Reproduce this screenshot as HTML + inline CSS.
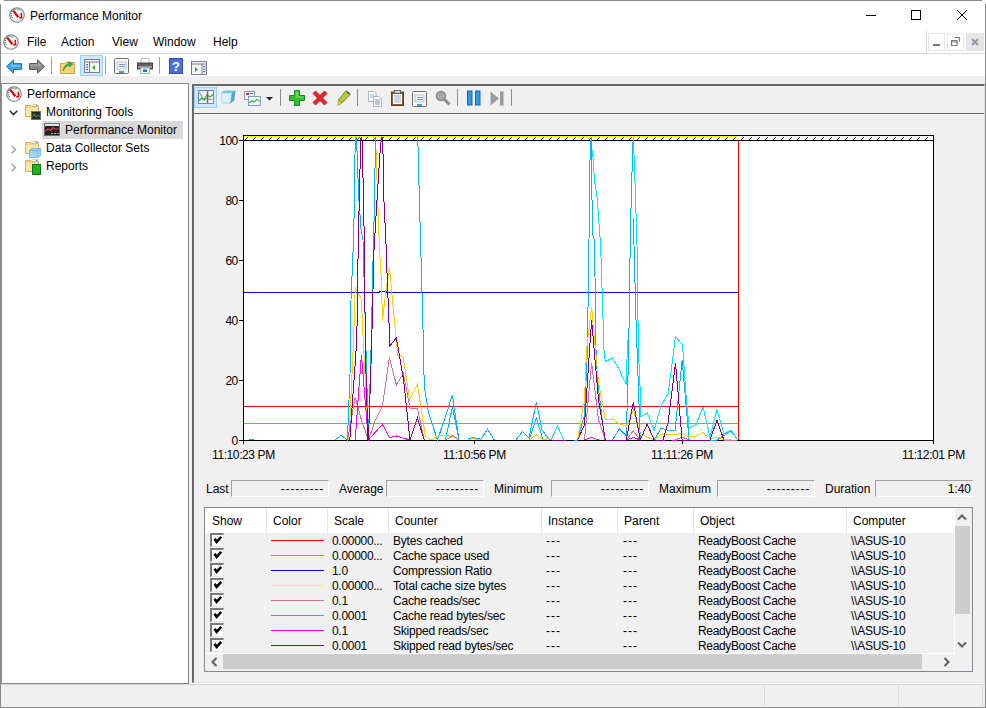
<!DOCTYPE html>
<html><head><meta charset="utf-8">
<style>
*{margin:0;padding:0;box-sizing:border-box}
html,body{width:986px;height:708px;overflow:hidden;background:#fff}
body{position:relative;font-family:"Liberation Sans",sans-serif;font-size:12px;color:#000}
.a{position:absolute}
.t{position:absolute;line-height:14px;white-space:nowrap}
.box{position:absolute;background:#f0f0f0;border-top:1px solid #a0a0a0;border-left:1px solid #a0a0a0;border-right:1px solid #fff;border-bottom:1px solid #fff}
.sep{position:absolute;width:1px;background:#8c8c8c}
.hs{position:absolute;width:1px;height:20px;background:#d9d9d9}
svg{position:absolute;overflow:visible}
</style></head>
<body>
<!-- window border -->
<div class="a" style="left:4px;top:0;width:978px;height:1px;background:#8a8a8a"></div>
<div class="a" style="left:0;top:4px;width:1px;height:704px;background:#8a8a8a"></div>
<div class="a" style="left:985px;top:4px;width:1px;height:704px;background:#8a8a8a"></div>
<div class="a" style="left:0;top:707px;width:986px;height:1px;background:#8a8a8a"></div>


<svg width="0" height="0" style="position:absolute">
<defs>
<symbol id="app" viewBox="0 0 16 16">
<circle cx="8" cy="8" r="7.2" fill="#fff" stroke="#858585" stroke-width="1.3"/>
<circle cx="8" cy="8" r="6.2" fill="none" stroke="#dcdcdc" stroke-width="0.7"/>
<path d="M3.6 10.8 A5 5 0 0 1 10.8 3.6" fill="none" stroke="#4a7a5a" stroke-width="1.3" stroke-dasharray="1.1 0.9"/>
<path d="M4.2 3.6 L9.4 10.2" stroke="#e00000" stroke-width="2.2"/>
<path d="M12.2 5.8 L12.6 10.8 L10.2 10.8" fill="none" stroke="#e00000" stroke-width="1.5"/>
</symbol>
<symbol id="folder" viewBox="0 0 16 16">
<path d="M0.5 2.5 H6 L7 3.5 H13.5 V13.5 H0.5 Z" fill="#f3d689" stroke="#d7b25a" stroke-width="1"/>
<path d="M1 5 H13 V13 H1 Z" fill="#fbe6a8"/>
<rect x="8" y="1.5" width="5" height="2" fill="#fff" stroke="#c9b27a" stroke-width="0.6"/>
<rect x="11" y="2" width="1.5" height="1" fill="#3a7bd5"/>
</symbol>
</defs>
</svg>
<svg style="left:9px;top:7px" width="16" height="16"><use href="#app"/></svg>
<svg style="left:3px;top:34px" width="16" height="16"><use href="#app"/></svg>

<!-- MDI child buttons -->
<div class="a" style="left:926px;top:31px;width:1px;height:23px;background:#d9d9d9"></div>
<div class="a" style="left:928px;top:33px;width:17px;height:18px;border:1px solid #e6e6e6;background:#fff"></div>
<div class="a" style="left:933px;top:44px;width:7px;height:2px;background:#6d7a8a"></div>
<div class="a" style="left:947px;top:33px;width:17px;height:18px;border:1px solid #e6e6e6;background:#fff"></div>
<svg style="left:951px;top:37px" width="9" height="9"><path d="M3.5 0.5 H8.5 V4.5 M0.5 3.5 H6 V8.5 H0.5 Z M0.5 5 H6" fill="none" stroke="#6d7a8a" stroke-width="1.2"/></svg>
<div class="a" style="left:966px;top:33px;width:18px;height:18px;background:#e5e5e5"></div>
<svg style="left:971px;top:38px" width="8" height="8"><path d="M1 1 L7 7 M7 1 L1 7" stroke="#8a97a6" stroke-width="1.8"/></svg>

<!-- title buttons -->
<div class="a" style="left:866px;top:15px;width:10px;height:1px;background:#000"></div>
<div class="a" style="left:911px;top:10px;width:10px;height:10px;border:1px solid #000"></div>
<svg style="left:957px;top:10px" width="10" height="10"><path d="M0 0 L10 10 M10 0 L0 10" stroke="#000" stroke-width="1"/></svg>

<!-- title -->
<div class="t" style="left:30px;top:9px">Performance Monitor</div>
<!-- menu -->
<div class="t" style="left:27px;top:35px">File</div>
<div class="t" style="left:61px;top:35px">Action</div>
<div class="t" style="left:112px;top:35px">View</div>
<div class="t" style="left:153px;top:35px">Window</div>
<div class="t" style="left:213px;top:35px">Help</div>
<div class="a" style="left:1px;top:53px;width:984px;height:1px;background:#d9d9d9"></div>

<!-- toolbar gray strip -->
<div class="a" style="left:1px;top:76px;width:984px;height:631px;background:#f0f0f0"></div>

<!-- tree panel -->
<div class="a" style="left:1px;top:83px;width:188px;height:601px;background:#fff;border:1px solid #828790"></div>


<!-- main toolbar -->
<svg style="left:6px;top:59px" width="16" height="15"><path d="M0.5 7.5 L7.5 0.8 V4.5 H15.5 V10.5 H7.5 V14.2 Z" fill="#3da2e8" stroke="#1b78c8" stroke-width="1"/><path d="M3 7.5 L7 4 V6 H14 V8 H7 Z" fill="#8fd0ff" opacity=".6"/></svg>
<svg style="left:29px;top:59px" width="16" height="15"><path d="M15.5 7.5 L8.5 0.8 V4.5 H0.5 V10.5 H8.5 V14.2 Z" fill="#8a8a8a" stroke="#5a5a5a" stroke-width="1"/><path d="M1.5 5.5 H9 V3 L13 7 H1.5Z" fill="#b5b5b5" opacity=".7"/></svg>
<div class="sep" style="left:51px;top:57px;height:17px;background:#a0a0a0"></div>
<svg style="left:60px;top:59px" width="16" height="16"><path d="M0.5 4.5 H5 L6 3.5 H14.5 V14.5 H0.5 Z" fill="#f7dc8e" stroke="#c9a24a"/><path d="M1 7 H14 V14 H1Z" fill="#f5d27a"/><path d="M3 12 C4 7 6 5 9 4.5 L8.5 2.5 L13 5 L9.5 8 L9.2 6.3 C7 6.8 5 8.5 3 12Z" fill="#3cb043" stroke="#2a8a30" stroke-width=".6"/></svg>
<div class="a" style="left:80px;top:55px;width:23px;height:21px;background:#cce8ff;border:1px solid #99d1ff"></div>
<svg style="left:84px;top:59px" width="16" height="14"><rect x="0.5" y="0.5" width="15" height="13" fill="#f4f4f4" stroke="#7a7f87"/><path d="M0.5 3 H15.5" stroke="#7a7f87"/><rect x="2" y="5" width="2" height="1.2" fill="#3a6fc4"/><rect x="2" y="7.5" width="2" height="1.2" fill="#3a6fc4"/><rect x="2" y="10" width="2" height="1.2" fill="#3a6fc4"/><path d="M5.5 3 V13.5" stroke="#7a7f87"/><path d="M11 6 L8 8.5 L11 11Z" fill="#32b032"/></svg>
<div class="sep" style="left:105px;top:57px;height:17px;background:#a0a0a0"></div>
<svg style="left:114px;top:58px" width="16" height="16"><rect x="0.5" y="0.5" width="14" height="15" rx="1" fill="#f8f8f8" stroke="#6e6e6e"/><rect x="3" y="4" width="9" height="7" fill="#eef3fa" stroke="#a8b4c4" stroke-width=".7"/><path d="M5 6.5 H11 M5 8.5 H11" stroke="#6b8fc7" stroke-width=".9"/><rect x="5" y="13" width="5" height="2" fill="#3aa0e8"/></svg>
<svg style="left:137px;top:58px" width="16" height="16"><rect x="4" y="0.5" width="8" height="5" fill="#fff" stroke="#bbb"/><rect x="0.5" y="5" width="15" height="6" fill="#5f5f5f" stroke="#444"/><rect x="1" y="8" width="14" height="2" fill="#9a9a9a"/><rect x="3.5" y="10" width="9" height="5.5" fill="#eaf4fb" stroke="#9bb"/><rect x="6" y="11.5" width="4" height="2.5" fill="#2a6fb0"/></svg>
<div class="sep" style="left:159px;top:57px;height:17px;background:#a0a0a0"></div>
<svg style="left:169px;top:58px" width="14" height="16"><rect x="0" y="0" width="14" height="16" fill="#2f4fb5"/><rect x="1" y="1" width="12" height="14" fill="#4a6fd8"/><text x="7" y="13" text-anchor="middle" font-family="Liberation Sans" font-size="13" font-weight="bold" fill="#fff">?</text></svg>
<svg style="left:191px;top:61px" width="16" height="14"><rect x="0.5" y="0.5" width="15" height="13" fill="#f4f4f4" stroke="#7a7f87"/><path d="M0.5 3 H15.5 M11 3 V13.5" stroke="#7a7f87"/><rect x="12.3" y="5" width="2" height="1.2" fill="#3a6fc4"/><rect x="12.3" y="7.5" width="2" height="1.2" fill="#3a6fc4"/><rect x="12.3" y="10" width="2" height="1.2" fill="#3a6fc4"/><path d="M4 6 L7 8.5 L4 11Z" fill="#32b032"/></svg>

<!-- tree -->
<svg style="left:6px;top:86px" width="16" height="16"><use href="#app"/></svg>
<div class="t" style="left:27px;top:87px">Performance</div>
<svg style="left:9px;top:110px" width="10" height="6"><path d="M0.7 0.7 L4.5 4.5 L8.3 0.7" fill="none" stroke="#333" stroke-width="1.6"/></svg>
<svg style="left:25px;top:103px" width="16" height="16"><use href="#folder"/></svg>
<svg style="left:31px;top:111px" width="10" height="9"><rect x="0.5" y="0.5" width="9" height="8" fill="#2b2b2b" stroke="#6a6f78"/><path d="M1.5 5.5 L3.5 3 L5 6 L6.5 4.5 L8.5 5" fill="none" stroke="#35c040" stroke-width=".9"/></svg>
<div class="t" style="left:46px;top:105px">Monitoring Tools</div>
<div class="a" style="left:42px;top:121px;width:141px;height:18px;background:#d9d9d9"></div>
<svg style="left:44px;top:123px" width="16" height="13"><rect x="0.5" y="0.5" width="15" height="12" fill="#262020" stroke="#6a6f78"/><rect x="1" y="1" width="14" height="2" fill="#dfe3ea"/><path d="M1.5 8 L4 6 L6.5 7.5 L9 4.5 L11 6 L14.5 6" fill="none" stroke="#e04040" stroke-width="1.2"/><path d="M7 10.5 H9 M10 10.5 H12 M13 10.5 H14.5" stroke="#ccc" stroke-width=".8"/></svg>
<div class="t" style="left:65px;top:123px">Performance Monitor</div>
<svg style="left:11px;top:145px" width="6" height="10"><path d="M0.7 0.7 L4.5 4.5 L0.7 8.3" fill="none" stroke="#9a9a9a" stroke-width="1.3"/></svg>
<svg style="left:25px;top:140px" width="16" height="16"><use href="#folder"/></svg>
<svg style="left:29px;top:148px" width="12" height="10"><path d="M0.5 2.5 L3 0.5 H11.5 V7.5 L9 9.5 H0.5Z" fill="#9fd4ef" stroke="#5eaed8" stroke-width=".7"/><path d="M0.5 2.5 H9 V9.5 M9 2.5 L11.5 0.5" fill="none" stroke="#5eaed8" stroke-width=".7"/></svg>
<div class="t" style="left:46px;top:141px">Data Collector Sets</div>
<svg style="left:11px;top:163px" width="6" height="10"><path d="M0.7 0.7 L4.5 4.5 L0.7 8.3" fill="none" stroke="#9a9a9a" stroke-width="1.3"/></svg>
<svg style="left:25px;top:158px" width="16" height="16"><use href="#folder"/></svg>
<div class="a" style="left:32px;top:164px;width:9px;height:11px;background:#22b022;border:1px solid #117711"></div>
<div class="t" style="left:46px;top:159px">Reports</div>

<!-- right pane -->
<div class="a" style="left:192px;top:84px;width:793px;height:599px;border-top:2px solid #696969;border-left:2px solid #696969;border-right:1px solid #e3e3e3;border-bottom:1px solid #e3e3e3;background:#f0f0f0"></div>
<div class="a" style="left:194px;top:113px;width:790px;height:1px;background:#696969"></div>


<!-- right pane toolbar -->
<div class="a" style="left:194px;top:87px;width:23px;height:21px;background:#cce8ff;border:1px solid #99d1ff"></div>
<svg style="left:198px;top:90px" width="16" height="14"><rect x="0.5" y="0.5" width="15" height="13" fill="#f2f6fc" stroke="#6d86b8"/><path d="M5.5 1 V13 M10.5 1 V13 M1 5 H15 M1 9 H15" stroke="#d7e0ee" stroke-width=".6"/><path d="M1 2 L5 8.5 L9 9 L14 9.5" fill="none" stroke="#6d86d8" stroke-width="1"/><path d="M1 11 L3.5 8 L6 10 L9 5 L12 7 L15 4.5" fill="none" stroke="#38b13c" stroke-width="1.3"/><path d="M9.5 1 V13" stroke="#e23a2a" stroke-width="1.4"/></svg>
<svg style="left:220px;top:90px" width="16" height="14"><path d="M1 3 L4 0.5 H15.5 L14 10.5 L10.5 13.5 H2 Z" fill="#7cc6e0"/><path d="M1 3 H12 L10.5 13.5 H2Z" fill="#bfe6f4"/><path d="M12 3 L15.5 0.5 L14 10.5 L10.5 13.5Z" fill="#4aa3c8"/><path d="M2 4 H11 L10 12 H3Z" fill="#e3f4fb" opacity=".8"/></svg>
<svg style="left:244px;top:91px" width="17" height="15"><rect x="0.5" y="0.5" width="10" height="8" fill="#f2f4f8" stroke="#8a9bc0"/><rect x="2" y="2" width="3" height="2" fill="#c0282d"/><rect x="6" y="2" width="3" height="1" fill="#4a6fd8"/><rect x="4.5" y="5.5" width="12" height="9" fill="#eef2f8" stroke="#8a9bc0"/><path d="M5.5 12 L8 9.5 L10 11 L12.5 8.5 L15.5 10" fill="none" stroke="#38b13c" stroke-width="1.1"/></svg>
<svg style="left:266px;top:97px" width="8" height="4"><path d="M0 0 H7 L3.5 3.5Z" fill="#222"/></svg>
<div class="sep" style="left:280px;top:89px;height:17px;background:#8c8c8c"></div>
<svg style="left:289px;top:90px" width="16" height="16"><path d="M5.5 0.5 H10.5 V5.5 H15.5 V10.5 H10.5 V15.5 H5.5 V10.5 H0.5 V5.5 H5.5Z" fill="#2fbf2f" stroke="#178a17"/><path d="M6.5 1.5 H9.5 V6.5 H14.5 V8 H6.5Z" fill="#7fe07f" opacity=".7"/></svg>
<svg style="left:312px;top:90px" width="16" height="16"><path d="M1 3.5 L3.5 1 L8 5.5 L12.5 1 L15 3.5 L10.5 8 L15 12.5 L12.5 15 L8 10.5 L3.5 15 L1 12.5 L5.5 8Z" fill="#e4252a" stroke="#b01417" stroke-width=".8"/></svg>
<svg style="left:336px;top:90px" width="15" height="16"><path d="M10 0.5 L14.5 4 L6 13 L2.5 10Z" fill="#b8c83a" stroke="#6b7a1a" stroke-width=".8"/><path d="M2.5 10 L6 13 L2 15.5Z" fill="#e8dc40" stroke="#8a7a10" stroke-width=".6"/><path d="M11 2 L13.5 4" stroke="#3a4a9a" stroke-width="1.2"/></svg>
<div class="sep" style="left:357px;top:89px;height:17px;background:#8c8c8c"></div>
<svg style="left:368px;top:91px" width="14" height="16"><path d="M0.5 0.5 H6 L8 2.5 V10.5 H0.5Z" fill="#fff" stroke="#9aa4b0" stroke-width=".8"/><path d="M2 4 H6 M2 6 H6" stroke="#7a9ad0" stroke-width=".8"/><path d="M5.5 5.5 H11 L13.5 8 V15.5 H5.5Z" fill="#fff" stroke="#9aa4b0" stroke-width=".8"/><path d="M7 9 H12 M7 11 H12 M7 13 H12" stroke="#3a6fc4" stroke-width=".8"/></svg>
<svg style="left:391px;top:90px" width="13" height="16"><rect x="0.5" y="2" width="12" height="13.5" fill="#8a5a2a" stroke="#6a4018"/><rect x="2" y="4" width="9" height="10" fill="#fff"/><path d="M3 6 H10 M3 8 H10 M3 10 H10 M3 12 H10" stroke="#7a9ad0" stroke-width=".8"/><rect x="3.5" y="0.5" width="6" height="3" fill="#cfcfcf" stroke="#555" stroke-width=".8"/></svg>
<svg style="left:412px;top:91px" width="16" height="16"><rect x="0.5" y="0.5" width="14" height="15" rx="1" fill="#f8f8f8" stroke="#6e6e6e"/><rect x="3" y="4" width="9" height="7" fill="#eef3fa" stroke="#a8b4c4" stroke-width=".7"/><path d="M5 6.5 H11 M5 8.5 H11" stroke="#6b8fc7" stroke-width=".9"/><rect x="5" y="13" width="5" height="2" fill="#3aa0e8"/></svg>
<svg style="left:435px;top:90px" width="16" height="16"><circle cx="6" cy="6" r="4.5" fill="#a8a8a8" stroke="#8a8a8a" stroke-width="1.5"/><path d="M9 9 L14.5 14.5" stroke="#8a8a8a" stroke-width="3"/></svg>
<div class="sep" style="left:457px;top:89px;height:17px;background:#8c8c8c"></div>
<svg style="left:467px;top:90px" width="14" height="16"><rect x="0.5" y="1" width="4.5" height="14" fill="#2f9ae0" stroke="#1466b0"/><rect x="8.5" y="1" width="4.5" height="14" fill="#2f9ae0" stroke="#1466b0"/></svg>
<svg style="left:490px;top:91px" width="15" height="15"><path d="M0.5 0.5 L9 7.5 L0.5 14.5Z" fill="#9a9a9a"/><rect x="10" y="0.5" width="3.5" height="14" fill="#9a9a9a"/></svg>
<div class="sep" style="left:511px;top:89px;height:17px;background:#8c8c8c"></div>


<!-- chart -->
<div class="a" style="left:243px;top:135px;width:691px;height:306px;background:#fff"></div>
<svg style="left:0;top:0" width="986" height="708" shape-rendering="crispEdges">
<g stroke="#000" stroke-width="1">
<path d="M243 135.5 H934 M243 140.5 H934 M243 440.5 H934 M243.5 135 V444 M933.5 135 V444"/>
<path d="M239 140.5 H243 M239 200.5 H243 M239 260.5 H243 M239 320.5 H243 M239 380.5 H243 M239 440.5 H243 M474.5 441 V444 M682.5 441 V444"/>
</g>
<path d="M244 136.5 H738" stroke="#ffff00" stroke-width="1"/>
</svg>
<svg style="left:0;top:0" width="986" height="708" shape-rendering="crispEdges"><g fill="#404040"><rect x="245" y="139" width="1" height="1"/><rect x="246" y="138" width="1" height="1"/><rect x="247" y="137" width="1" height="1"/><rect x="253" y="139" width="1" height="1"/><rect x="254" y="138" width="1" height="1"/><rect x="255" y="137" width="1" height="1"/><rect x="261" y="139" width="1" height="1"/><rect x="262" y="138" width="1" height="1"/><rect x="263" y="137" width="1" height="1"/><rect x="269" y="139" width="1" height="1"/><rect x="270" y="138" width="1" height="1"/><rect x="271" y="137" width="1" height="1"/><rect x="277" y="139" width="1" height="1"/><rect x="278" y="138" width="1" height="1"/><rect x="279" y="137" width="1" height="1"/><rect x="285" y="139" width="1" height="1"/><rect x="286" y="138" width="1" height="1"/><rect x="287" y="137" width="1" height="1"/><rect x="293" y="139" width="1" height="1"/><rect x="294" y="138" width="1" height="1"/><rect x="295" y="137" width="1" height="1"/><rect x="301" y="139" width="1" height="1"/><rect x="302" y="138" width="1" height="1"/><rect x="303" y="137" width="1" height="1"/><rect x="309" y="139" width="1" height="1"/><rect x="310" y="138" width="1" height="1"/><rect x="311" y="137" width="1" height="1"/><rect x="317" y="139" width="1" height="1"/><rect x="318" y="138" width="1" height="1"/><rect x="319" y="137" width="1" height="1"/><rect x="325" y="139" width="1" height="1"/><rect x="326" y="138" width="1" height="1"/><rect x="327" y="137" width="1" height="1"/><rect x="333" y="139" width="1" height="1"/><rect x="334" y="138" width="1" height="1"/><rect x="335" y="137" width="1" height="1"/><rect x="341" y="139" width="1" height="1"/><rect x="342" y="138" width="1" height="1"/><rect x="343" y="137" width="1" height="1"/><rect x="349" y="139" width="1" height="1"/><rect x="350" y="138" width="1" height="1"/><rect x="351" y="137" width="1" height="1"/><rect x="357" y="139" width="1" height="1"/><rect x="358" y="138" width="1" height="1"/><rect x="359" y="137" width="1" height="1"/><rect x="365" y="139" width="1" height="1"/><rect x="366" y="138" width="1" height="1"/><rect x="367" y="137" width="1" height="1"/><rect x="373" y="139" width="1" height="1"/><rect x="374" y="138" width="1" height="1"/><rect x="375" y="137" width="1" height="1"/><rect x="381" y="139" width="1" height="1"/><rect x="382" y="138" width="1" height="1"/><rect x="383" y="137" width="1" height="1"/><rect x="389" y="139" width="1" height="1"/><rect x="390" y="138" width="1" height="1"/><rect x="391" y="137" width="1" height="1"/><rect x="397" y="139" width="1" height="1"/><rect x="398" y="138" width="1" height="1"/><rect x="399" y="137" width="1" height="1"/><rect x="405" y="139" width="1" height="1"/><rect x="406" y="138" width="1" height="1"/><rect x="407" y="137" width="1" height="1"/><rect x="413" y="139" width="1" height="1"/><rect x="414" y="138" width="1" height="1"/><rect x="415" y="137" width="1" height="1"/><rect x="421" y="139" width="1" height="1"/><rect x="422" y="138" width="1" height="1"/><rect x="423" y="137" width="1" height="1"/><rect x="429" y="139" width="1" height="1"/><rect x="430" y="138" width="1" height="1"/><rect x="431" y="137" width="1" height="1"/><rect x="437" y="139" width="1" height="1"/><rect x="438" y="138" width="1" height="1"/><rect x="439" y="137" width="1" height="1"/><rect x="445" y="139" width="1" height="1"/><rect x="446" y="138" width="1" height="1"/><rect x="447" y="137" width="1" height="1"/><rect x="453" y="139" width="1" height="1"/><rect x="454" y="138" width="1" height="1"/><rect x="455" y="137" width="1" height="1"/><rect x="461" y="139" width="1" height="1"/><rect x="462" y="138" width="1" height="1"/><rect x="463" y="137" width="1" height="1"/><rect x="469" y="139" width="1" height="1"/><rect x="470" y="138" width="1" height="1"/><rect x="471" y="137" width="1" height="1"/><rect x="477" y="139" width="1" height="1"/><rect x="478" y="138" width="1" height="1"/><rect x="479" y="137" width="1" height="1"/><rect x="485" y="139" width="1" height="1"/><rect x="486" y="138" width="1" height="1"/><rect x="487" y="137" width="1" height="1"/><rect x="493" y="139" width="1" height="1"/><rect x="494" y="138" width="1" height="1"/><rect x="495" y="137" width="1" height="1"/><rect x="501" y="139" width="1" height="1"/><rect x="502" y="138" width="1" height="1"/><rect x="503" y="137" width="1" height="1"/><rect x="509" y="139" width="1" height="1"/><rect x="510" y="138" width="1" height="1"/><rect x="511" y="137" width="1" height="1"/><rect x="517" y="139" width="1" height="1"/><rect x="518" y="138" width="1" height="1"/><rect x="519" y="137" width="1" height="1"/><rect x="525" y="139" width="1" height="1"/><rect x="526" y="138" width="1" height="1"/><rect x="527" y="137" width="1" height="1"/><rect x="533" y="139" width="1" height="1"/><rect x="534" y="138" width="1" height="1"/><rect x="535" y="137" width="1" height="1"/><rect x="541" y="139" width="1" height="1"/><rect x="542" y="138" width="1" height="1"/><rect x="543" y="137" width="1" height="1"/><rect x="549" y="139" width="1" height="1"/><rect x="550" y="138" width="1" height="1"/><rect x="551" y="137" width="1" height="1"/><rect x="557" y="139" width="1" height="1"/><rect x="558" y="138" width="1" height="1"/><rect x="559" y="137" width="1" height="1"/><rect x="565" y="139" width="1" height="1"/><rect x="566" y="138" width="1" height="1"/><rect x="567" y="137" width="1" height="1"/><rect x="573" y="139" width="1" height="1"/><rect x="574" y="138" width="1" height="1"/><rect x="575" y="137" width="1" height="1"/><rect x="581" y="139" width="1" height="1"/><rect x="582" y="138" width="1" height="1"/><rect x="583" y="137" width="1" height="1"/><rect x="589" y="139" width="1" height="1"/><rect x="590" y="138" width="1" height="1"/><rect x="591" y="137" width="1" height="1"/><rect x="597" y="139" width="1" height="1"/><rect x="598" y="138" width="1" height="1"/><rect x="599" y="137" width="1" height="1"/><rect x="605" y="139" width="1" height="1"/><rect x="606" y="138" width="1" height="1"/><rect x="607" y="137" width="1" height="1"/><rect x="613" y="139" width="1" height="1"/><rect x="614" y="138" width="1" height="1"/><rect x="615" y="137" width="1" height="1"/><rect x="621" y="139" width="1" height="1"/><rect x="622" y="138" width="1" height="1"/><rect x="623" y="137" width="1" height="1"/><rect x="629" y="139" width="1" height="1"/><rect x="630" y="138" width="1" height="1"/><rect x="631" y="137" width="1" height="1"/><rect x="637" y="139" width="1" height="1"/><rect x="638" y="138" width="1" height="1"/><rect x="639" y="137" width="1" height="1"/><rect x="645" y="139" width="1" height="1"/><rect x="646" y="138" width="1" height="1"/><rect x="647" y="137" width="1" height="1"/><rect x="653" y="139" width="1" height="1"/><rect x="654" y="138" width="1" height="1"/><rect x="655" y="137" width="1" height="1"/><rect x="661" y="139" width="1" height="1"/><rect x="662" y="138" width="1" height="1"/><rect x="663" y="137" width="1" height="1"/><rect x="669" y="139" width="1" height="1"/><rect x="670" y="138" width="1" height="1"/><rect x="671" y="137" width="1" height="1"/><rect x="677" y="139" width="1" height="1"/><rect x="678" y="138" width="1" height="1"/><rect x="679" y="137" width="1" height="1"/><rect x="685" y="139" width="1" height="1"/><rect x="686" y="138" width="1" height="1"/><rect x="687" y="137" width="1" height="1"/><rect x="693" y="139" width="1" height="1"/><rect x="694" y="138" width="1" height="1"/><rect x="695" y="137" width="1" height="1"/><rect x="701" y="139" width="1" height="1"/><rect x="702" y="138" width="1" height="1"/><rect x="703" y="137" width="1" height="1"/><rect x="709" y="139" width="1" height="1"/><rect x="710" y="138" width="1" height="1"/><rect x="711" y="137" width="1" height="1"/><rect x="717" y="139" width="1" height="1"/><rect x="718" y="138" width="1" height="1"/><rect x="719" y="137" width="1" height="1"/><rect x="725" y="139" width="1" height="1"/><rect x="726" y="138" width="1" height="1"/><rect x="727" y="137" width="1" height="1"/><rect x="733" y="139" width="1" height="1"/><rect x="734" y="138" width="1" height="1"/><rect x="735" y="137" width="1" height="1"/><rect x="741" y="139" width="1" height="1"/><rect x="742" y="138" width="1" height="1"/><rect x="743" y="137" width="1" height="1"/><rect x="749" y="139" width="1" height="1"/><rect x="750" y="138" width="1" height="1"/><rect x="751" y="137" width="1" height="1"/><rect x="757" y="139" width="1" height="1"/><rect x="758" y="138" width="1" height="1"/><rect x="759" y="137" width="1" height="1"/><rect x="765" y="139" width="1" height="1"/><rect x="766" y="138" width="1" height="1"/><rect x="767" y="137" width="1" height="1"/><rect x="773" y="139" width="1" height="1"/><rect x="774" y="138" width="1" height="1"/><rect x="775" y="137" width="1" height="1"/><rect x="781" y="139" width="1" height="1"/><rect x="782" y="138" width="1" height="1"/><rect x="783" y="137" width="1" height="1"/><rect x="789" y="139" width="1" height="1"/><rect x="790" y="138" width="1" height="1"/><rect x="791" y="137" width="1" height="1"/><rect x="797" y="139" width="1" height="1"/><rect x="798" y="138" width="1" height="1"/><rect x="799" y="137" width="1" height="1"/><rect x="805" y="139" width="1" height="1"/><rect x="806" y="138" width="1" height="1"/><rect x="807" y="137" width="1" height="1"/><rect x="813" y="139" width="1" height="1"/><rect x="814" y="138" width="1" height="1"/><rect x="815" y="137" width="1" height="1"/><rect x="821" y="139" width="1" height="1"/><rect x="822" y="138" width="1" height="1"/><rect x="823" y="137" width="1" height="1"/><rect x="829" y="139" width="1" height="1"/><rect x="830" y="138" width="1" height="1"/><rect x="831" y="137" width="1" height="1"/><rect x="837" y="139" width="1" height="1"/><rect x="838" y="138" width="1" height="1"/><rect x="839" y="137" width="1" height="1"/><rect x="845" y="139" width="1" height="1"/><rect x="846" y="138" width="1" height="1"/><rect x="847" y="137" width="1" height="1"/><rect x="853" y="139" width="1" height="1"/><rect x="854" y="138" width="1" height="1"/><rect x="855" y="137" width="1" height="1"/><rect x="861" y="139" width="1" height="1"/><rect x="862" y="138" width="1" height="1"/><rect x="863" y="137" width="1" height="1"/><rect x="869" y="139" width="1" height="1"/><rect x="870" y="138" width="1" height="1"/><rect x="871" y="137" width="1" height="1"/><rect x="877" y="139" width="1" height="1"/><rect x="878" y="138" width="1" height="1"/><rect x="879" y="137" width="1" height="1"/><rect x="885" y="139" width="1" height="1"/><rect x="886" y="138" width="1" height="1"/><rect x="887" y="137" width="1" height="1"/><rect x="893" y="139" width="1" height="1"/><rect x="894" y="138" width="1" height="1"/><rect x="895" y="137" width="1" height="1"/><rect x="901" y="139" width="1" height="1"/><rect x="902" y="138" width="1" height="1"/><rect x="903" y="137" width="1" height="1"/><rect x="909" y="139" width="1" height="1"/><rect x="910" y="138" width="1" height="1"/><rect x="911" y="137" width="1" height="1"/><rect x="917" y="139" width="1" height="1"/><rect x="918" y="138" width="1" height="1"/><rect x="919" y="137" width="1" height="1"/><rect x="925" y="139" width="1" height="1"/><rect x="926" y="138" width="1" height="1"/><rect x="927" y="137" width="1" height="1"/></g></svg>
<div class="t" style="left:219px;top:134px;width:18.6px;text-align:right;letter-spacing:-0.6px">100</div>
<div class="t" style="left:219px;top:194px;width:18.6px;text-align:right;letter-spacing:-0.6px">80</div>
<div class="t" style="left:219px;top:254px;width:18.6px;text-align:right;letter-spacing:-0.6px">60</div>
<div class="t" style="left:219px;top:314px;width:18.6px;text-align:right;letter-spacing:-0.6px">40</div>
<div class="t" style="left:219px;top:374px;width:18.6px;text-align:right;letter-spacing:-0.6px">20</div>
<div class="t" style="left:219px;top:434px;width:18.6px;text-align:right;letter-spacing:-0.6px">0</div>
<div class="t" style="left:212px;top:448px;letter-spacing:-0.4px">11:10:23 PM</div>
<div class="t" style="left:443px;top:448px;letter-spacing:-0.4px">11:10:56 PM</div>
<div class="t" style="left:651px;top:448px;letter-spacing:-0.4px">11:11:26 PM</div>
<div class="t" style="left:902px;top:448px;letter-spacing:-0.4px">11:12:01 PM</div>
<svg id="data" style="left:0;top:0" width="986" height="708">
<defs><clipPath id="pc"><rect x="244" y="137" width="689" height="304"/></clipPath></defs>
<g clip-path="url(#pc)" fill="none" stroke-width="1" shape-rendering="crispEdges">
<path stroke="#ff0000" d="M243 406.5 H738"/>
<path stroke="#00ff00" d="M243 423.5 H738"/>
<path stroke="#0000ff" d="M244 292.5 H379 V291.5 H386 V292.5 H738"/>
<path stroke="#00b4ff" d="M249 439.5 H254 M335 440 L341.2 435.3 L347.4 440 L350 375 L351 300 L353.3 245 L354.5 201 L355.3 128 M355.5 128 L356.8 145 L358.6 195 L361.1 230 L363 240 L366 350 L368.4 440 L371 350 L373.5 240 L374.7 195 L375.5 128 M417.5 128 L420.5 240 L421.2 263 L423.6 350 L424.2 385.5 L428.4 412 L437.4 440 L445 418 L452.4 395 L459 440 M445.4 440 L452.4 407 L459 440 M468 439 L473 437.5 L480 439 M480.6 440 L487.5 429 L494.4 440 M516 440 L522.4 431.5 L529 438 L536.4 401.8 L542 430 L550 440 M529 440 L536.4 418 L543 440 M574.3 440 L577.5 440 L584.5 415 L587.4 350 L589 240 L589.3 210 L590 160 L591.6 128 M591.6 128 L592 200 L592.6 235 L594.5 240 L596 350 L597.8 383.5 L604.8 440 M612.4 440 L619.4 429 L626.3 436 L628.7 350 L630.2 245 L631.4 190 L633.5 128 M633.5 218 L634 245 L636 320 L640.3 440 M654.2 440 L661.2 428 L668.2 430.5 L675.1 430.5 L682.1 360 L689.1 440 L717 440 L730.9 431 L737.9 440"/>
<path stroke="#00e8ff" d="M545 435 L551 440 L557.4 426 L563.7 440 M592.5 150 L594.5 180 L597.4 200 L600.6 245 L604 350 L605.3 361.7 L612.4 358 L619.4 370 L626.3 385 L627.5 340 M633.5 128 L634 155 L635.6 200 L637 245 L638.4 350 L640.5 397 L640.3 417 L647.2 413 L654.2 430 L661.2 405 L668.2 393.5 L675.5 336.5 L682.5 344.7 L686 395 L689.1 428 L696 424.5 L703 407 L710 437 L717 409.6 L723.9 434 L730.9 430 L737.9 440"/>
<path stroke="#ffd000" d="M348.5 440 L349.8 420.8 L353.6 340 L355.2 287.4 L361.4 299 L363.7 350 L368.4 440 M376 150 L377.2 186 L379.3 245 L381.6 283.5 L382.4 320.8 L386.3 287.4 L389.4 267.2 L397.2 350 L397.5 355 L403 356.3 L409.7 400 L417.5 384.4 L425.3 436 L431 440 L438 436 L445.4 435 L452.4 435 L459 440 M468 440 L473 438.5 L480 440 M529 440 L536.4 435 L543 440 L550 438 M577.5 440 L584.5 400 L586.5 350 L591.6 307 L595.5 350 L598.5 382 L605.4 420 L612.4 419 L619.4 424 L626.3 426 L633.3 410 L640.3 434 L647.2 437 L654.2 440 L661.2 434 L668.2 435 L675.1 434.5 L682.1 433.5 L689.1 437 L696 436 L703 432.5 L710 439 L717 437 L723.9 439 L730.9 440"/>
<path stroke="#d0709a" d="M347.5 440 L355.2 397 L361.4 420 L368.4 440 L375.4 420 L382.4 406 L389.4 357.5 L396.4 385 L403.4 373.4 L410 408 L417.4 408 L424.2 440 M445 440 L452.4 436 L459 440 M584.5 440 L591.6 363 L598.5 420 L605.4 440 M626.3 440 L633.3 431 L640.3 440 M675.1 440 L682.1 437 L689.1 440 M724 440 H737"/>
<path stroke="#ff00ff" d="M355.2 440 L361.4 354.6 L368.4 440 L382.4 424.3 L389.4 437.5 L396.4 436 L403 438 L410 440 M584.5 440 L591.6 437.5 L598.5 440 M626.3 440 L633.3 437.5 L640.3 440 M657 440 H665 M672 440 H677"/>
<path stroke="#800080" d="M349.8 440 L356.8 340 L358.3 240 L360.3 157 L361.4 128 M361.5 128 L362.7 158 L363.4 202 L364.5 245 L365.3 350 L368 440 M368.5 440 L371.5 350 L374 250 L377 200 L380 153 L382.4 128 M382.5 128 L383.9 200 L386.3 250 L387 272.6 L389.4 333 L389.4 346.4 L396.4 338 L403.6 380 L410 440 L417.5 418 L424.2 440 M552 440 H567 M577.5 440 L584.5 425 L591.6 320 L598.5 400 L605.4 440 L626.3 440 L633.3 402 L640.3 440 L647.2 424 L654.2 440 L663 440 L668.2 422 L675.5 363 L682.1 440 L710 440 L717 420 L723.9 440"/>
<path stroke="#ff0000" d="M738.5 141 V440"/>
</g>
</svg>

<!-- legend -->
<div class="t" style="left:206px;top:482px">Last</div>
<div class="box" style="left:231px;top:480px;width:98px;height:17px"></div>
<div class="t" style="left:231px;top:482px;width:93px;text-align:right;letter-spacing:0.8px">---------</div>
<div class="t" style="left:339px;top:482px">Average</div>
<div class="box" style="left:386px;top:480px;width:98px;height:17px"></div>
<div class="t" style="left:386px;top:482px;width:93px;text-align:right;letter-spacing:0.8px">---------</div>
<div class="t" style="left:494px;top:482px">Minimum</div>
<div class="box" style="left:551px;top:480px;width:98px;height:17px"></div>
<div class="t" style="left:551px;top:482px;width:93px;text-align:right;letter-spacing:0.8px">---------</div>
<div class="t" style="left:659px;top:482px">Maximum</div>
<div class="box" style="left:717px;top:480px;width:98px;height:17px"></div>
<div class="t" style="left:717px;top:482px;width:93px;text-align:right;letter-spacing:0.8px">---------</div>
<div class="t" style="left:825px;top:482px">Duration</div>
<div class="box" style="left:875px;top:480px;width:98px;height:17px"></div>
<div class="t" style="left:875px;top:482px;width:96px;text-align:right">1:40</div>


<!-- list view -->
<div class="a" style="left:204px;top:507px;width:769px;height:165px;border:1px solid #828790;background:#f0f0f0"></div>
<div class="a" style="left:205px;top:508px;width:750px;height:25px;background:#fff"></div>
<div class="a" style="left:266px;top:508px;width:1px;height:25px;background:#e5e5e5"></div>
<div class="a" style="left:327px;top:508px;width:1px;height:25px;background:#e5e5e5"></div>
<div class="a" style="left:388px;top:508px;width:1px;height:25px;background:#e5e5e5"></div>
<div class="a" style="left:541px;top:508px;width:1px;height:25px;background:#e5e5e5"></div>
<div class="a" style="left:617px;top:508px;width:1px;height:25px;background:#e5e5e5"></div>
<div class="a" style="left:693px;top:508px;width:1px;height:25px;background:#e5e5e5"></div>
<div class="a" style="left:846px;top:508px;width:1px;height:25px;background:#e5e5e5"></div>
<div class="t" style="left:212px;top:514px">Show</div>
<div class="t" style="left:273px;top:514px">Color</div>
<div class="t" style="left:334px;top:514px">Scale</div>
<div class="t" style="left:395px;top:514px">Counter</div>
<div class="t" style="left:548px;top:514px">Instance</div>
<div class="t" style="left:624px;top:514px">Parent</div>
<div class="t" style="left:700px;top:514px">Object</div>
<div class="t" style="left:853px;top:514px">Computer</div>
<div style="position:absolute;left:205px;top:533px;width:750px;height:120px;overflow:hidden">
<div class="a" style="left:5px;top:0px;width:14px;height:14px;border-top:2px solid #7a7a7a;border-left:2px solid #7a7a7a;border-right:1px solid #e8e8e8;border-bottom:1px solid #e8e8e8;background:#fff"></div><svg style="left:9px;top:3px" width="9" height="8"><path d="M0.6 2.8 L2.6 5.8 L7.2 0.9" fill="none" stroke="#000" stroke-width="2.6"/></svg><div class="a" style="left:66px;top:7px;width:53px;height:1px;background:#ff0000"></div><div class="t" style="left:127px;top:1px;letter-spacing:-0.3px">0.00000...</div><div class="t" style="left:188px;top:1px;letter-spacing:-0.2px">Bytes cached</div><div class="t" style="left:341px;top:1px;letter-spacing:1px">---</div><div class="t" style="left:418px;top:1px;letter-spacing:1px">---</div><div class="t" style="left:493px;top:1px;letter-spacing:-0.35px">ReadyBoost Cache</div><div class="t" style="left:646px;top:1px;letter-spacing:-0.25px">\\ASUS-10</div>
<div class="a" style="left:5px;top:15px;width:14px;height:14px;border-top:2px solid #7a7a7a;border-left:2px solid #7a7a7a;border-right:1px solid #e8e8e8;border-bottom:1px solid #e8e8e8;background:#fff"></div><svg style="left:9px;top:18px" width="9" height="8"><path d="M0.6 2.8 L2.6 5.8 L7.2 0.9" fill="none" stroke="#000" stroke-width="2.6"/></svg><div class="a" style="left:66px;top:22px;width:53px;height:1px;background:#00ff00"></div><div class="t" style="left:127px;top:16px;letter-spacing:-0.3px">0.00000...</div><div class="t" style="left:188px;top:16px;letter-spacing:-0.2px">Cache space used</div><div class="t" style="left:341px;top:16px;letter-spacing:1px">---</div><div class="t" style="left:418px;top:16px;letter-spacing:1px">---</div><div class="t" style="left:493px;top:16px;letter-spacing:-0.35px">ReadyBoost Cache</div><div class="t" style="left:646px;top:16px;letter-spacing:-0.25px">\\ASUS-10</div>
<div class="a" style="left:5px;top:30px;width:14px;height:14px;border-top:2px solid #7a7a7a;border-left:2px solid #7a7a7a;border-right:1px solid #e8e8e8;border-bottom:1px solid #e8e8e8;background:#fff"></div><svg style="left:9px;top:33px" width="9" height="8"><path d="M0.6 2.8 L2.6 5.8 L7.2 0.9" fill="none" stroke="#000" stroke-width="2.6"/></svg><div class="a" style="left:66px;top:37px;width:53px;height:1px;background:#0000ff"></div><div class="t" style="left:127px;top:31px;letter-spacing:-0.3px">1.0</div><div class="t" style="left:188px;top:31px;letter-spacing:-0.2px">Compression Ratio</div><div class="t" style="left:341px;top:31px;letter-spacing:1px">---</div><div class="t" style="left:418px;top:31px;letter-spacing:1px">---</div><div class="t" style="left:493px;top:31px;letter-spacing:-0.35px">ReadyBoost Cache</div><div class="t" style="left:646px;top:31px;letter-spacing:-0.25px">\\ASUS-10</div>
<div class="a" style="left:5px;top:45px;width:14px;height:14px;border-top:2px solid #7a7a7a;border-left:2px solid #7a7a7a;border-right:1px solid #e8e8e8;border-bottom:1px solid #e8e8e8;background:#fff"></div><svg style="left:9px;top:48px" width="9" height="8"><path d="M0.6 2.8 L2.6 5.8 L7.2 0.9" fill="none" stroke="#000" stroke-width="2.6"/></svg><div class="a" style="left:66px;top:52px;width:53px;height:1px;background:#ffff00"></div><div class="t" style="left:127px;top:46px;letter-spacing:-0.3px">0.00000...</div><div class="t" style="left:188px;top:46px;letter-spacing:-0.2px">Total cache size bytes</div><div class="t" style="left:341px;top:46px;letter-spacing:1px">---</div><div class="t" style="left:418px;top:46px;letter-spacing:1px">---</div><div class="t" style="left:493px;top:46px;letter-spacing:-0.35px">ReadyBoost Cache</div><div class="t" style="left:646px;top:46px;letter-spacing:-0.25px">\\ASUS-10</div>
<div class="a" style="left:5px;top:60px;width:14px;height:14px;border-top:2px solid #7a7a7a;border-left:2px solid #7a7a7a;border-right:1px solid #e8e8e8;border-bottom:1px solid #e8e8e8;background:#fff"></div><svg style="left:9px;top:63px" width="9" height="8"><path d="M0.6 2.8 L2.6 5.8 L7.2 0.9" fill="none" stroke="#000" stroke-width="2.6"/></svg><div class="a" style="left:66px;top:67px;width:53px;height:1px;background:#d0709a"></div><div class="t" style="left:127px;top:61px;letter-spacing:-0.3px">0.1</div><div class="t" style="left:188px;top:61px;letter-spacing:-0.2px">Cache reads/sec</div><div class="t" style="left:341px;top:61px;letter-spacing:1px">---</div><div class="t" style="left:418px;top:61px;letter-spacing:1px">---</div><div class="t" style="left:493px;top:61px;letter-spacing:-0.35px">ReadyBoost Cache</div><div class="t" style="left:646px;top:61px;letter-spacing:-0.25px">\\ASUS-10</div>
<div class="a" style="left:5px;top:75px;width:14px;height:14px;border-top:2px solid #7a7a7a;border-left:2px solid #7a7a7a;border-right:1px solid #e8e8e8;border-bottom:1px solid #e8e8e8;background:#fff"></div><svg style="left:9px;top:78px" width="9" height="8"><path d="M0.6 2.8 L2.6 5.8 L7.2 0.9" fill="none" stroke="#000" stroke-width="2.6"/></svg><div class="a" style="left:66px;top:82px;width:53px;height:1px;background:#00c0ff"></div><div class="t" style="left:127px;top:76px;letter-spacing:-0.3px">0.0001</div><div class="t" style="left:188px;top:76px;letter-spacing:-0.2px">Cache read bytes/sec</div><div class="t" style="left:341px;top:76px;letter-spacing:1px">---</div><div class="t" style="left:418px;top:76px;letter-spacing:1px">---</div><div class="t" style="left:493px;top:76px;letter-spacing:-0.35px">ReadyBoost Cache</div><div class="t" style="left:646px;top:76px;letter-spacing:-0.25px">\\ASUS-10</div>
<div class="a" style="left:5px;top:90px;width:14px;height:14px;border-top:2px solid #7a7a7a;border-left:2px solid #7a7a7a;border-right:1px solid #e8e8e8;border-bottom:1px solid #e8e8e8;background:#fff"></div><svg style="left:9px;top:93px" width="9" height="8"><path d="M0.6 2.8 L2.6 5.8 L7.2 0.9" fill="none" stroke="#000" stroke-width="2.6"/></svg><div class="a" style="left:66px;top:97px;width:53px;height:1px;background:#ff00ff"></div><div class="t" style="left:127px;top:91px;letter-spacing:-0.3px">0.1</div><div class="t" style="left:188px;top:91px;letter-spacing:-0.2px">Skipped reads/sec</div><div class="t" style="left:341px;top:91px;letter-spacing:1px">---</div><div class="t" style="left:418px;top:91px;letter-spacing:1px">---</div><div class="t" style="left:493px;top:91px;letter-spacing:-0.35px">ReadyBoost Cache</div><div class="t" style="left:646px;top:91px;letter-spacing:-0.25px">\\ASUS-10</div>
<div class="a" style="left:5px;top:105px;width:14px;height:14px;border-top:2px solid #7a7a7a;border-left:2px solid #7a7a7a;border-right:1px solid #e8e8e8;border-bottom:1px solid #e8e8e8;background:#fff"></div><svg style="left:9px;top:108px" width="9" height="8"><path d="M0.6 2.8 L2.6 5.8 L7.2 0.9" fill="none" stroke="#000" stroke-width="2.6"/></svg><div class="a" style="left:66px;top:112px;width:53px;height:1px;background:#800080"></div><div class="t" style="left:127px;top:106px;letter-spacing:-0.3px">0.0001</div><div class="t" style="left:188px;top:106px;letter-spacing:-0.2px">Skipped read bytes/sec</div><div class="t" style="left:341px;top:106px;letter-spacing:1px">---</div><div class="t" style="left:418px;top:106px;letter-spacing:1px">---</div><div class="t" style="left:493px;top:106px;letter-spacing:-0.35px">ReadyBoost Cache</div><div class="t" style="left:646px;top:106px;letter-spacing:-0.25px">\\ASUS-10</div>
</div>
<div class="a" style="left:954px;top:533px;width:1px;height:121px;background:#fff"></div>
<div class="a" style="left:205px;top:653px;width:750px;height:1px;background:#fff"></div>
<div class="a" style="left:955px;top:526px;width:15px;height:88px;background:#cdcdcd"></div>
<svg style="left:957px;top:514px" width="10" height="7"><path d="M1 5.5 L5 1.5 L9 5.5" fill="none" stroke="#606060" stroke-width="2"/></svg>
<svg style="left:957px;top:641px" width="10" height="7"><path d="M1 1.5 L5 5.5 L9 1.5" fill="none" stroke="#606060" stroke-width="2"/></svg>
<div class="a" style="left:223px;top:654px;width:699px;height:15px;background:#cdcdcd"></div>
<svg style="left:211px;top:657px" width="7" height="10"><path d="M5.5 1 L1.5 5 L5.5 9" fill="none" stroke="#606060" stroke-width="2"/></svg>
<svg style="left:943px;top:657px" width="7" height="10"><path d="M1.5 1 L5.5 5 L1.5 9" fill="none" stroke="#606060" stroke-width="2"/></svg>

<!-- status bar -->
<div class="a" style="left:192px;top:683px;width:793px;height:1px;background:#fff"></div><div class="a" style="left:1px;top:684px;width:984px;height:1px;background:#d5d5d5"></div>
<div class="hs" style="left:764px;top:686px"></div>
<div class="hs" style="left:898px;top:686px"></div>
<div class="hs" style="left:982px;top:686px"></div>

</body></html>
